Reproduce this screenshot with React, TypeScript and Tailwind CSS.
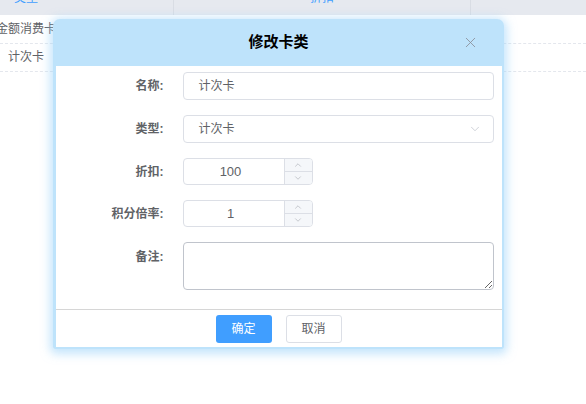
import { ChevronDown, ChevronUp, X } from 'lucide-react';

const font = { fontFamily: '"Liberation Sans", "Noto Sans CJK SC", sans-serif' };

function Label({ text }: { text: string }) {
  return (
    <div className="w-[109px] shrink-0 text-right text-[12px] font-bold text-[#606266] pr-[1px]">{text}</div>
  );
}

function NumberInput({ value }: { value: string }) {
  return (
    <div className="flex h-[27px] w-[130px] rounded-[4px] border border-[#dcdfe6] bg-white overflow-hidden">
      <div className="flex flex-1 items-center justify-center text-[13px] text-[#606266] pr-[6px]">{value}</div>
      <div className="flex w-[28px] flex-col border-l border-[#dcdfe6] bg-[#f5f7fa]">
        <div className="flex flex-1 items-center justify-center border-b border-[#dcdfe6]">
          <ChevronUp size={10} strokeWidth={1.5} className="text-[#a8abb2]" />
        </div>
        <div className="flex flex-1 items-center justify-center">
          <ChevronDown size={10} strokeWidth={1.5} className="text-[#a8abb2]" />
        </div>
      </div>
    </div>
  );
}

export default function App() {
  return (
    <div className="relative h-[404px] w-[586px] overflow-hidden bg-white" style={font}>
      {/* table behind the dialog */}
      <div className="flex h-[15px] bg-[#e6e9ef] overflow-hidden">
        <div className="w-[174px] border-r border-[#d9dde4]">
          <div className="flex w-[52px] justify-center">
            <span className="mt-[-8px] text-[12px] leading-[12px] text-[#409eff]">类型</span>
          </div>
        </div>
        <div className="flex w-[297px] justify-center border-r border-[#d9dde4]">
          <span className="mt-[-8px] text-[12px] leading-[12px] text-[#409eff]">折扣</span>
        </div>
        <div className="flex-1" />
      </div>
      {['金额消费卡', '计次卡'].map((t) => (
        <div key={t} className="flex h-[28.5px] items-center border-b border-dashed border-[#e4e7ed]">
          <div className="flex w-[52px] justify-center">
            <span className="whitespace-nowrap text-[12px] text-[#606266]">{t}</span>
          </div>
        </div>
      ))}

      {/* dialog */}
      <div className="absolute left-[53px] top-[19px] w-[451px] rounded-t-[7px] rounded-b-[3px] bg-[#bee3fb] px-[2.5px] pb-[2px] shadow-[0_2px_10px_3px_rgba(150,208,250,0.55)]">
        <div className="relative flex h-[47px] items-center justify-center">
          <span className="text-[15px] font-bold text-black">修改卡类</span>
          <X size={17} strokeWidth={1.2} className="absolute right-[23px] top-[15px] text-[#8a8f99]" />
        </div>
        <div className="bg-white">
          <div className="pt-[6px] pb-[19px] pr-[8px]">
            <div className="flex items-center gap-[18px]">
              <Label text="名称:" />
              <div className="flex h-[28px] flex-1 items-center rounded-[4px] border border-[#dcdfe6] px-[15px] text-[12px] text-[#606266]">
                计次卡
              </div>
            </div>
            <div className="mt-[15px] flex items-center gap-[18px]">
              <Label text="类型:" />
              <div className="flex h-[28px] flex-1 items-center justify-between rounded-[4px] border border-[#dcdfe6] pl-[15px] pr-[11px] text-[12px] text-[#606266]">
                <span>计次卡</span>
                <ChevronDown size={14} strokeWidth={1.3} className="text-[#c0c4cc]" />
              </div>
            </div>
            <div className="mt-[15px] flex items-center gap-[18px]">
              <Label text="折扣:" />
              <NumberInput value="100" />
            </div>
            <div className="mt-[15px] flex items-center gap-[18px]">
              <Label text="积分倍率:" />
              <NumberInput value="1" />
            </div>
            <div className="mt-[15px] flex items-start gap-[18px]">
              <div className="pt-[6px]">
                <Label text="备注:" />
              </div>
              <textarea
                className="h-[48px] flex-1 resize-y rounded-[4px] border border-[#c0c4cc] px-[15px] py-[5px] text-[12px] text-[#606266] outline-none"
                style={font}
              />
            </div>
          </div>
          <div className="flex h-[38px] items-start justify-center gap-[14px] border-t border-[#d6d6d6] pt-[5px]">
            <button className="h-[28px] w-[56px] rounded-[3px] bg-[#409eff] text-[12px] text-white">确定</button>
            <button className="h-[28px] w-[56px] rounded-[3px] border border-[#dcdfe6] bg-white text-[12px] text-[#606266]">取消</button>
          </div>
        </div>
      </div>
    </div>
  );
}
